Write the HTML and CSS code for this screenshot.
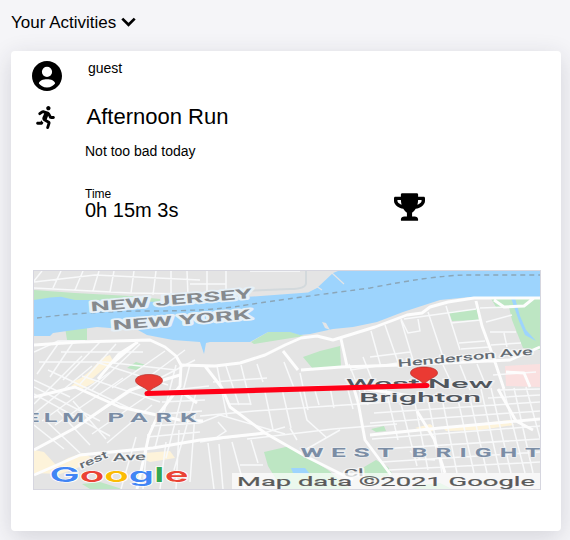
FILE: index.html
```html
<!DOCTYPE html>
<html lang="en">
<head>
<meta charset="utf-8">
<title>Your Activities</title>
<link rel="stylesheet" href="styles.css">
</head>
<body>
<header class="heading">
  <span>Your Activities</span>
  <svg class="chevron" viewBox="0 0 15 10"><path d="M1.300 1.600 7.500 7.800 13.700 1.600"/></svg>
</header>
<article class="card">
  <div class="user">
    <svg class="avatar" viewBox="2 2 20 20"><path d="M12 2C6.48 2 2 6.48 2 12s4.48 10 10 10 10-4.48 10-10S17.520 2 12 2zm0 3.800a3.400 3.400 0 1 1 0 6.800 3.400 3.400 0 0 1 0-6.800zM12 19.600c-2.500 0-4.200-1-5.400-2.600.1-1.800 2.800-2.800 5.400-2.800s5.300 1 5.400 2.800c-1.200 1.600-2.900 2.600-5.400 2.600z"/></svg>
    <span class="name">guest</span>
  </div>
  <div class="title-row">
    <svg class="runner" viewBox="0 0 416 512"><path d="M272 96c26.51 0 48-21.49 48-48S298.51 0 272 0s-48 21.49-48 48 21.49 48 48 48zM113.69 317.47l-14.8 34.52H32c-17.67 0-32 14.33-32 32s14.33 32 32 32h77.45c19.25 0 36.58-11.44 44.11-29.09l8.79-20.52-10.67-6.3c-17.32-10.23-30.06-25.37-37.99-42.61zM384 223.99h-44.03l-26.06-53.25c-12.5-25.55-35.45-44.23-61.78-50.94l-71.08-21.14c-28.3-6.8-57.77-.55-80.84 17.14l-39.67 30.41c-14.03 10.75-16.69 30.83-5.94 44.86s30.84 16.66 44.86 5.92l39.69-30.41c7.67-5.89 17.44-8 25.27-6.14l14.7 4.37-37.46 87.39c-12.62 29.48-1.31 64.01 26.3 80.31l84.98 50.17-27.47 87.73c-5.28 16.86 4.11 34.82 20.97 40.09 3.19 1 6.41 1.48 9.58 1.48 13.61 0 26.23-8.77 30.52-22.45l31.64-101.06c5.91-20.77-2.89-43.08-21.64-54.39l-61.24-36.14 31.31-78.28 20.27 41.43c8 16.34 24.92 26.89 43.11 26.89H384c17.67 0 32-14.33 32-32s-14.33-31.99-32-31.99z"/></svg>
    <h1 class="title">Afternoon Run</h1>
  </div>
  <p class="note">Not too bad today</p>
  <div class="stats">
    <div class="stat">
      <span class="label">Time</span>
      <span class="value">0h 15m 3s</span>
    </div>
    <svg class="trophy" viewBox="0 0 576 512"><path d="M552 64H448V24c0-13.3-10.7-24-24-24H152c-13.3 0-24 10.7-24 24v40H24C10.7 64 0 74.7 0 88v56c0 35.7 22.5 72.4 61.9 100.7 31.5 22.7 69.8 37.1 110 41.7C203.3 338.5 240 360 240 360v72h-48c-35.3 0-64 20.7-64 56v12c0 6.6 5.4 12 12 12h296c6.6 0 12-5.4 12-12v-12c0-35.3-28.7-56-64-56h-48v-72s36.7-21.5 68.1-73.6c40.3-4.6 78.6-19 110-41.7 39.3-28.3 61.9-65 61.9-100.7V88c0-13.3-10.7-24-24-24zM99.3 192.8C74.9 175.2 64 155.6 64 144v-16h64.2c1 32.6 5.8 61.2 12.8 86.2-15.1-5.2-29.2-12.4-41.7-21.4zM512 144c0 16.1-17.7 36.1-35.3 48.8-12.5 9-26.7 16.2-41.8 21.4 7-25 11.8-53.6 12.8-86.2H512v16z"/></svg>
  </div>
  <svg class="map" viewBox="34 271 506 218">
    <!-- parks -->
    <g fill="#bde6c3">
      <path d="M34 290 75 293 130 296 160 299V304H34z"/>
      <path d="M65 327H87V340H67z"/>
      <path d="M127 368 136 362 146 365 136 370z"/>
      <path d="M251 342 268 332H292L304 336 285 339 254 344z"/>
      <path d="M303 357 320 351 340 346 341 367 313 369z"/>
      <path d="M449 312 477 309 479 320 452 321z"/>
      <path d="M490 297H540V350L523 348 512 320 509 307H496z"/>
      <path d="M264 452 290 446 312 460 328 470 350 489H282L268 466z"/>
      <path d="M82 484 100 482 122 489H90z"/>
      <path d="M371 429 384 426 386 431 376 432z"/>
      <path d="M359 470 376 460 388 467 393 475 365 480z"/>
      <path d="M420 485 440 483 452 489H412z"/>
    </g>
    <g fill="#fdf3da">
      <path d="M34 450 44 452 56 465 68 458 83 453 94 459 80 467 60 474 34 473z"/>
      <path d="M132 454 170 451 175 458 150 462z"/>
      <path d="M102 358 110 355 113 361 93 378 78 386 71 386 90 371z"/>
      <path d="M72 382 88 375 95 382 82 389z"/>
      <path d="M415 428 430 424 437 429 430 432z"/>
      <path d="M442 427 475 424 510 420 514 425 480 430 446 431z"/>
    </g>
    <path fill="#fae0e0" d="M505 366 540 364V387L506 386z"/>
    <!-- water -->
    <g fill="#9dd4fd">
      <path d="M34 300 50 297.500 61 296.700 75 300 90 300 160 302 200 299 253 296.500 308 292.600 317 288 333 273 338 271H540V297H470L440 300 403 312 377 322 353 327 333 329 310 334 300 335 290 332H268L250 342 210 342 206 343 204 354 200 342 173 340 147 335 138 330 110 328 97 327 67 331 53 333 50 336 34 336z"/>
      <path d="M291 468 305 468 310 474 293 473z"/>
      <path d="M511 298 515 298 520 316 526 330 536 341 525 335 519 321z"/>
    </g>
    <path fill="#e4e5e6" d="M322 322 326 323 330 330 325 328z"/>
    <path d="M332 273 344 284M316 286 322 290" stroke="#e4e5e6" stroke-width="1.200"/>
    <path d="M37 318Q90 311 150 311T240 306 370 288Q430 276 465 275H540" fill="none" stroke="#8ba6b8" stroke-width="1.400" stroke-dasharray="5 4"/>
    <!-- minor streets -->
    <g class="streets">
      <path d="M34 282 95 275 200 280M42 271 34 281M53 288 61 271M75 290 83 271M93 291 99 271M110 292 114 271M131 293 134 271M153 295 156 271M171 296V271M188 296 187 271M34 288 130 293 190 294M207 271V293M226 271V291M190 284H226M250 271H300"/>
      <path d="M34 352 58 341 85 341M37 374 60 341M50 377 74 341M63 380 100 342M80 384 116 344M39 362 105 362 176 370M61 352 143 352M92 390 140 344M112 388 165 351M96 362 168 385M82 376 160 402M48 370 142 414M34 387 100 421"/>
      <path d="M34 404 82 356M34 414 92 366M42 421 110 372M55 425 123 378M72 430 140 385M92 434 154 391M107 443 152 405M34 394 110 436M34 380 70 397M34 425 64 449M44 419 80 453M57 410 90 445M73 401 106 439"/>
      <path d="M150 376 185 350M160 378 195 360M165 391 209 386M162 402 205 400M159 414 202 411M151 426 200 423M147 437 200 432M176 365 155 448M190 364 166 458M196 393 174 470M136 437 121 489M148 434 143 489M166 442 160 489M179 430 176 489M195 413 190 482"/>
      <path d="M217 366 227 417M226 366 239 405M241 365 251 405M257 364 263 382M284 362 294 388M300 373 308 410M213 382 267 378M225 393 262 391M229 404 251 404M265 392 273 430M282 389 291 428M299 388 307 420 327 438M314 387 319 405M330 387 334 408M347 386 353 409M363 384 368 405M200 416 254 411 390 402M200 423 220 415 285 434M218 422 226 431 217 437M232 442 245 489M251 440 258 463M208 443 214 489M219 444 223 489M200 442 225 438 260 434 285 427M247 439 333 429 397 424M263 465H240M290 428 297 440M305 450 340 430"/>
      <path d="M349 364 360 392M363 357 376 390M371 331 381 367M385 325 399 365M401 319 408 333 420 331 418 319M401 320 413 360M428 312 445 363M446 306 460 350M404 319 476 309M451 323 480 320M459 343 485 341M461 349 490 347M480 308 509 307M486 322 512 315M490 332H516M491 345 521 343M504 333 507 347M493 375 536 372M443 365 452 384M460 365 470 390M477 364 486 386M370 357 410 352M350 370 398 363"/>
      <path d="M374 413 540 402M370 423 540 411M372 439 540 426M380 449 540 439M382 462 540 452M389 470 540 462M386 390 398 440M400 400 417 466M414 398 428 470M428 399 442 473M443 403 457 473M457 395 474 473M469 394 487 473M481 389 500 473M491 388 511 473M503 387 525 473M514 388 533 473M526 387 540 438M410 451 420 459 435 460M498 390 540 389M488 398 540 395"/>
    </g>
    <g class="streets roads">
      <path d="M34 345 80 342 150 340 165 347 176 356 181 365 180 386 158 415 149 435 137 489M34 450 75 428 130 390 180 375M113 363 135 344M98 379 119 354 138 342M34 397 75 387 120 407 180 420 203 421M34 475 80 455 153 448 200 440 265 433M179 390 197 403"/>
      <path d="M180 365 215 366 240 363 265 355 285 345 301 338 317 336 333 340 375 327 407 315 422 313 430 307 448 302 474 298 540 298M341 339 347 366M283 351 298 370M205 366 222 388 230 407 265 433 307 457 353 480M301 370 341 367 401 365 510 360 540 347M494 300 504 307 524 306 534 298M476 301 482 326 493 356 504 389M264 389 347 386 424 398M352 382 358 402 365 440 391 475M370 435 440 428 540 419M417 411 434 439 445 473M498 389 516 421 533 430M506 372 524 373 530 387"/>
    </g>
    <path d="M306 271V283Q306 289 290 289L242 291" fill="none" stroke="#d3d9dc" stroke-width="2"/>
    <!-- place names -->
    <g class="labels state">
      <text transform="translate(91 311.500) rotate(-4.800)" textLength="162" lengthAdjust="spacingAndGlyphs">NEW JERSEY</text>
      <text transform="translate(113 330) rotate(-4.600)" textLength="138" lengthAdjust="spacingAndGlyphs">NEW YORK</text>
    </g>
    <g class="labels area">
      <text transform="translate(25 421.500) scale(1.850 1)" letter-spacing="2.600">ELM</text>
      <text transform="translate(107.500 421.500) scale(1.900 1)" letter-spacing="4.300">PARK</text>
      <text transform="translate(300.500 456.500) scale(1.950 1)" letter-spacing="3.900">WEST</text>
      <text transform="translate(411.500 456.500) scale(1.840 1)" letter-spacing="4.400">BRIGHT</text>
    </g>
    <g class="labels street">
      <text transform="translate(398 367) rotate(-5.300)" textLength="98" lengthAdjust="spacingAndGlyphs">Henderson</text>
      <text transform="translate(500 357) rotate(-4)" textLength="33" lengthAdjust="spacingAndGlyphs">Ave</text>
      <text transform="translate(81 469) rotate(-23)" textLength="30" lengthAdjust="spacingAndGlyphs">rest</text>
      <text transform="translate(113 461) rotate(-2)" textLength="33" lengthAdjust="spacingAndGlyphs">Ave</text>
      <text transform="translate(344 477) rotate(-3)" textLength="20" lengthAdjust="spacingAndGlyphs">Cl</text>
    </g>
    <g class="labels town">
      <text x="346" y="387.500" textLength="147" lengthAdjust="spacingAndGlyphs">West New</text>
      <text x="359" y="401.500" textLength="122" lengthAdjust="spacingAndGlyphs">Brighton</text>
    </g>
    <!-- route -->
    <g fill="#ea3a33" stroke="#b52e29" stroke-width=".7">
      <path d="M149 393C148 387 135.500 386 135.500 380.500 135.500 377 141 374.500 149 374.500S162.500 377 162.500 380.500C162.500 386 150 387 149 393z"/>
      <path d="M424 386C423 379 410.500 378 410.500 373 410.500 369.500 416 367 424 367S437.500 369.500 437.500 373C437.500 378 425 379 424 386z"/>
    </g>
    <path d="M147 393.500 427 385.500" stroke="#ff0017" stroke-width="5.200" stroke-linecap="round"/>
    <!-- attribution -->
    <path fill="#fff" fill-opacity=".7" d="M232 473H540V489H232z"/>
    <text class="credit" x="237" y="485.500" textLength="298" lengthAdjust="spacingAndGlyphs">Map data ©2021 Google</text>
    <g class="brand">
      <text x="49.500" y="481.500" textLength="139" lengthAdjust="spacingAndGlyphs"><tspan fill="#4285f4">G</tspan><tspan fill="#ea4335">o</tspan><tspan fill="#fbbc05">o</tspan><tspan fill="#4285f4">g</tspan><tspan fill="#34a853">l</tspan><tspan fill="#ea4335">e</tspan></text>
    </g>
  </svg>
</article>
</body>
</html>
```

FILE: styles.css
```css
* { box-sizing: border-box; }

body {
  margin: 0;
  height: 540px;
  overflow: hidden;
  padding: 12px 9px 0 11px;
  background: #f5f5f8;
  color: #000;
  font-family: "Liberation Sans", Arial, sans-serif;
}

svg { display: block; flex: none; }

.heading {
  display: flex;
  align-items: center;
  gap: 5px;
  height: 20px;
  margin-bottom: 19px;
  font-size: 17px;
  line-height: 20px;
}

.heading span { padding-top: 1px; }

.chevron {
  width: 15px;
  height: 10px;
  fill: none;
  stroke: #000;
  stroke-width: 2.700;
}

.card {
  height: 480px;
  padding: 9px 20px 0 22px;
  border-radius: 4px;
  background: #fff;
  box-shadow: 0 6px 24px rgba(40, 40, 60, .16);
}

.user, .title-row { display: flex; }
.user { height: 43px; }

.avatar {
  width: 30px;
  height: 30px;
  margin: 1px 26px 0 -1px;
}

.name { font-size: 14px; line-height: 16px; }

.title-row { height: 40px; padding-left: 3px; }

.runner {
  width: 19px;
  height: 23px;
  margin: 3px 31.500px 0 0;
}

.title {
  margin: 1px 0 0;
  font-size: 22px;
  line-height: 26px;
  font-weight: 400;
}

.note {
  margin: 0 0 28px 52px;
  font-size: 14px;
  line-height: 16px;
}

.stats {
  display: flex;
  justify-content: space-between;
  height: 83px;
  padding: 0 116.500px 0 52px;
}

.stat { display: flex; flex-direction: column; }
.label { font-size: 12px; line-height: 14px; }
.value { font-size: 20px; line-height: 19px; }

.trophy {
  width: 31px;
  height: 28px;
  margin-top: 6px;
}

.map {
  width: 508px;
  height: 220px;
  border: 1px solid #d6d6df;
  background: #e4e4e4;
  font-family: Roboto, sans-serif;
}

.streets { fill: none; stroke: #f8f9fa; stroke-width: 1.500; }
.roads { stroke: #fdfdfd; stroke-width: 2.900; stroke-linejoin: round; }

.labels { font-weight: 500; paint-order: stroke; stroke-linejoin: round; }
.state { font-size: 13.500px; font-weight: 700; fill: #868a8e; stroke: #e6f0f7; stroke-width: 3.500; }
.area { font-size: 13.500px; font-weight: 700; fill: #7b8da5; stroke: #eceef0; stroke-width: 1.500; }
.street { font-size: 10.500px; fill: #646c73; stroke: #f4f5f6; stroke-width: 2; }
.town { font-size: 13.500px; fill: #50565d; stroke: #f0f1f2; stroke-width: 2; }
.credit { font-size: 12.800px; fill: #5a5a5a; stroke: #5a5a5a; stroke-width: .2; }
.brand { font-family: Inter, sans-serif; font-size: 20px; font-weight: 600; paint-order: stroke; stroke: #fff; stroke-width: 1.200; }
```
